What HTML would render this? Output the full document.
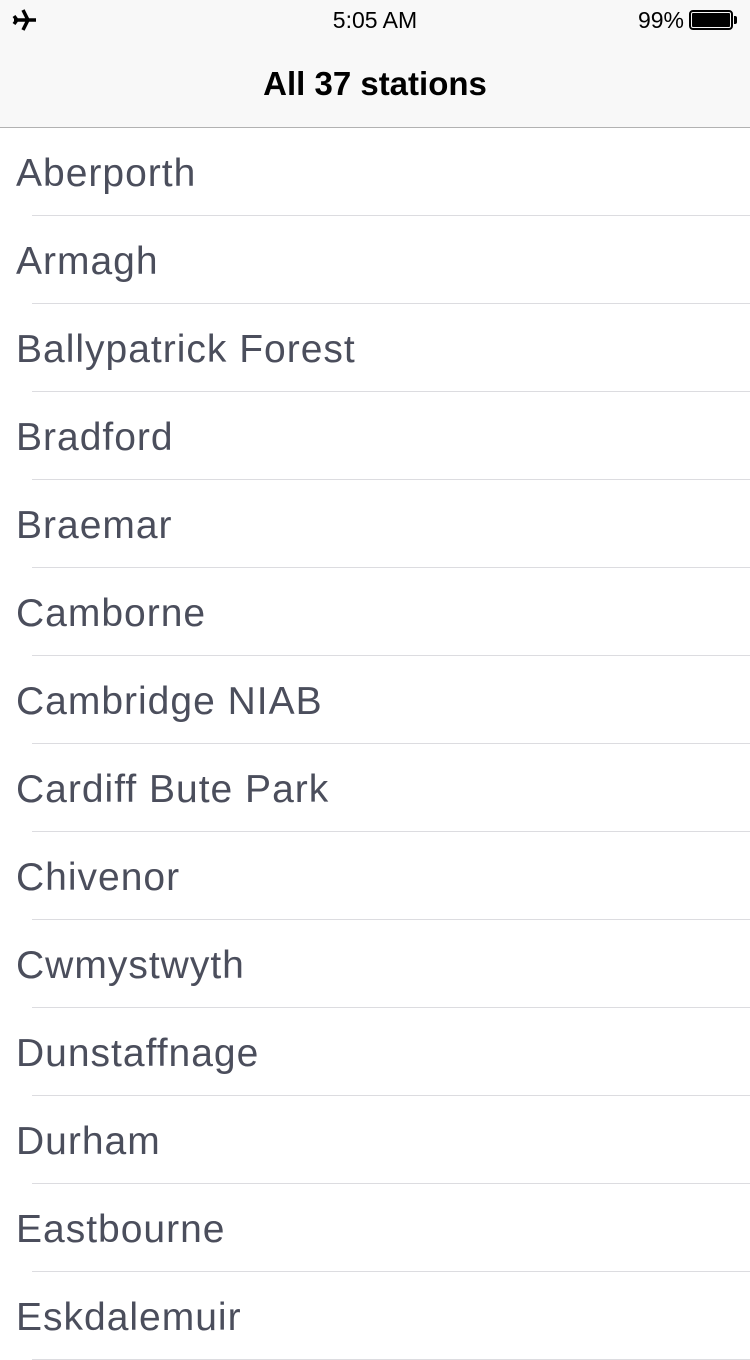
<!DOCTYPE html>
<html><head><style>
body{margin:0;width:750px;height:1334px;overflow:hidden;background:#fff;font-family:"Liberation Sans",sans-serif;}
.nav{position:absolute;left:0;top:0;width:750px;height:127px;background:#f8f8f8;border-bottom:1px solid #b2b2b2;}
.time{position:absolute;left:0;width:750px;top:7px;text-align:center;font-size:23px;color:#000;}
.pct{position:absolute;right:66px;top:7px;font-size:23px;}
.bat{position:absolute;left:689px;top:10px;width:44px;height:20px;border:2px solid #000;border-radius:4px;box-sizing:border-box;padding:1px;}
.bat div{width:100%;height:100%;background:#000;border-radius:1px;}
.nub{position:absolute;left:734px;top:16px;width:3px;height:8px;background:#000;border-radius:0 2px 2px 0;}
.title{position:absolute;left:0;width:750px;top:65px;text-align:center;font-size:33px;font-weight:bold;color:#000;}
.list{position:absolute;top:128px;left:0;width:750px;}
.row{height:87px;position:relative;border-bottom:1px solid #dcdce0;margin-left:32px;}
.row span{position:absolute;left:-16px;top:24px;font-size:39px;letter-spacing:1px;color:#4b4e5c;white-space:nowrap;}
</style></head><body>
<div class="nav">
<svg style="position:absolute;left:12px;top:9px" width="26" height="22" viewBox="0 0 26 22"><path d="M2 11 H24 M11 1 L16 11 L11 21 M2 7 L5 11 L2 15" stroke="#000" stroke-width="3.5" fill="none" stroke-linejoin="round"/></svg>
<div class="time">5:05 AM</div>
<div class="pct">99%</div>
<div class="bat"><div></div></div><div class="nub"></div>
<div class="title">All 37 stations</div>
</div>
<div class="list">
<div class="row"><span>Aberporth</span></div>
<div class="row"><span>Armagh</span></div>
<div class="row"><span>Ballypatrick Forest</span></div>
<div class="row"><span>Bradford</span></div>
<div class="row"><span>Braemar</span></div>
<div class="row"><span>Camborne</span></div>
<div class="row"><span>Cambridge NIAB</span></div>
<div class="row"><span>Cardiff Bute Park</span></div>
<div class="row"><span>Chivenor</span></div>
<div class="row"><span>Cwmystwyth</span></div>
<div class="row"><span>Dunstaffnage</span></div>
<div class="row"><span>Durham</span></div>
<div class="row"><span>Eastbourne</span></div>
<div class="row"><span>Eskdalemuir</span></div>
</div>
</body></html>
